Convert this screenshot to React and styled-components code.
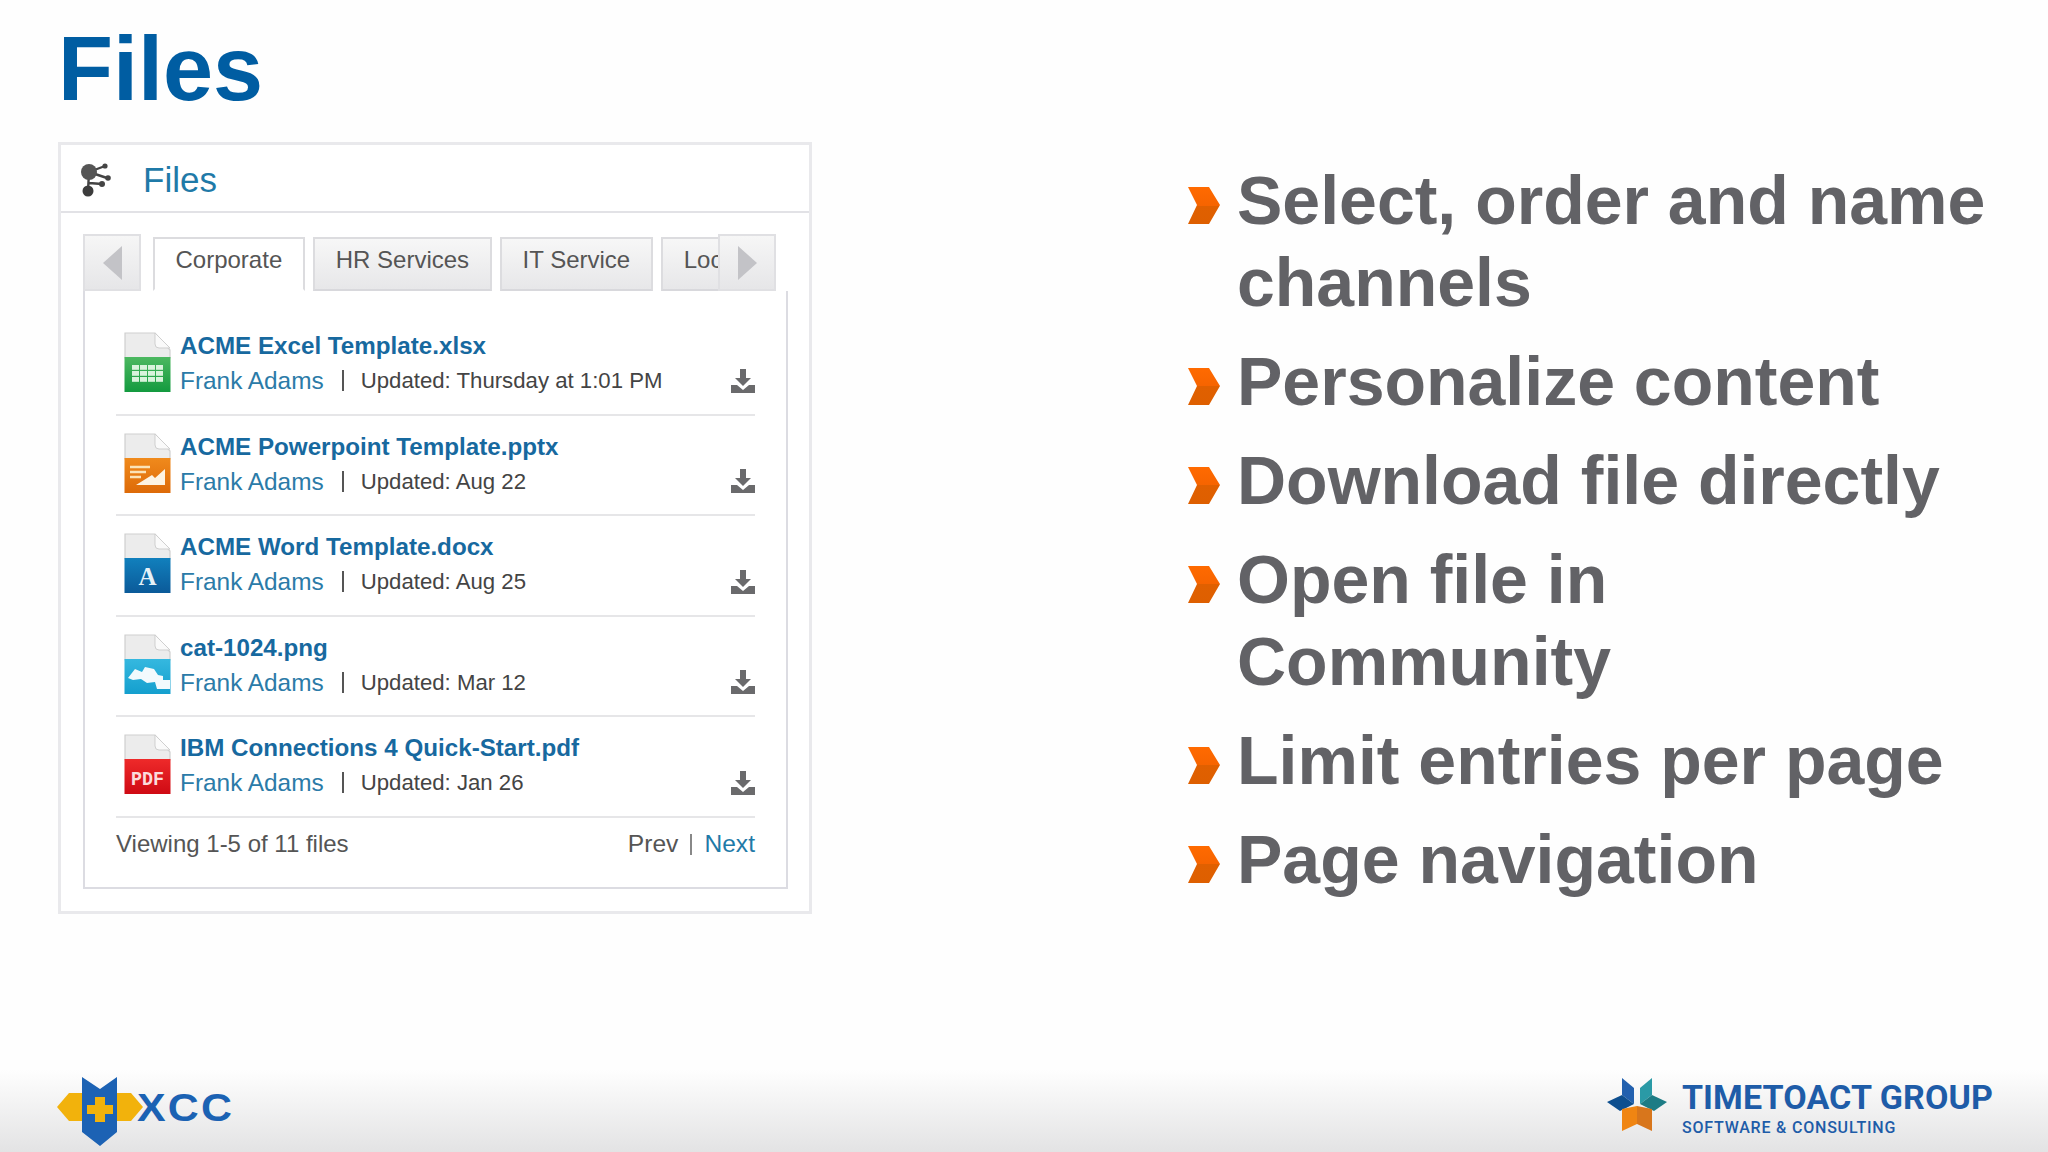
import React from "react";
import styled, { createGlobalStyle } from "styled-components";

const GlobalStyle = createGlobalStyle`
  html, body {
    margin: 0;
    padding: 0;
    background: #fefefe;
    font-family: "Liberation Sans", Arial, sans-serif;
  }
`;

const Page = styled.div`
  width: 2048px;
  height: 1152px;
  display: flex;
  flex-direction: column;
  overflow: hidden;
  background: #fefefe;
`;

const Title = styled.h1`
  margin: 19px 0 23px 58px;
  font-size: 90px;
  line-height: 100px;
  font-weight: 700;
  color: #005da2;
`;

const Main = styled.div`
  flex: 1;
  display: flex;
  align-items: flex-start;
  padding-left: 58px;
`;

const Panel = styled.section`
  width: 754px;
  height: 772px;
  box-sizing: border-box;
  display: flex;
  flex-direction: column;
  border: 3px solid #e9e9ec;
  background: #fff;
`;

const PanelHeader = styled.header`
  height: 68px;
  flex: none;
  box-sizing: border-box;
  display: flex;
  align-items: center;
  gap: 32px;
  padding: 3px 0 0 19px;
  border-bottom: 2px solid #e2e2e6;
  font-size: 35px;
  color: #1f7aa8;
`;

const PanelBody = styled.div`
  flex: 1;
  display: flex;
  flex-direction: column;
  padding: 21px 21px 22px 22px;
`;

const TabBar = styled.div`
  flex: none;
  width: 693px;
  height: 57px;
  display: flex;
  align-items: flex-end;
`;

const ArrowButton = styled.div`
  flex: none;
  width: 58px;
  height: 57px;
  box-sizing: border-box;
  display: flex;
  align-items: center;
  justify-content: center;
  border: 2px solid #e0e0e3;
  background: linear-gradient(#f6f6f6, #e6e6e8);
  &::before {
    content: "";
    border-top: 17px solid transparent;
    border-bottom: 17px solid transparent;
    ${(props) =>
      props.$dir === "left"
        ? "border-right: 19px solid #c3c3c7;"
        : "border-left: 19px solid #c3c3c7;"}
  }
`;

const TabStrip = styled.div`
  flex: 1;
  min-width: 0;
  height: 54px;
  display: flex;
  gap: 8.5px;
  padding-left: 12px;
  overflow: hidden;
`;

const Tab = styled.div`
  flex: none;
  height: 54px;
  box-sizing: border-box;
  padding: 0 20.5px 8px;
  display: flex;
  align-items: center;
  font-size: 24px;
  color: #555;
  border: 2px solid #dcdcdf;
  background: ${(props) =>
    props.$active ? "#fff" : "linear-gradient(#f7f7f7, #e7e7e9)"};
  border-bottom: ${(props) => (props.$active ? "2px solid #fff" : "2px solid #d8d8dc")};
`;

const TabContent = styled.div`
  flex: 1;
  width: 705px;
  box-sizing: border-box;
  display: flex;
  flex-direction: column;
  padding: 24px 31px 0;
  border: 2px solid #dcdce2;
  border-top: none;
`;

const Row = styled.div`
  height: 100.5px;
  flex: none;
  box-sizing: border-box;
  display: flex;
  align-items: flex-start;
  padding: 13px 0 0 8px;
  border-bottom: 2px solid #e6e6e8;
`;

const IconSlot = styled.div`
  flex: none;
  width: 47px;
  height: 60px;
  margin: 4px 9px 0 0;
`;

const RowText = styled.div`
  flex: 1;
  min-width: 0;
`;

const FileName = styled.div`
  font-size: 24.2px;
  line-height: 35px;
  font-weight: 700;
  color: #17699f;
  white-space: nowrap;
`;

const Meta = styled.div`
  display: flex;
  align-items: center;
  font-size: 24.4px;
  line-height: 35px;
  white-space: nowrap;
  color: #444;
`;

const Author = styled.span`
  color: #2b7ba8;
`;

const Updated = styled.span`
  font-size: 22.2px;
`;

const Divider = styled.span`
  width: 2px;
  height: 21px;
  margin: 0 17px 0 18px;
  background: #555;
`;

const DownloadSlot = styled.div`
  margin-left: auto;
  width: 24px;
  height: 24px;
  display: flex;
`;

const ListFooter = styled.div`
  flex: 1;
  display: flex;
  align-items: center;
  justify-content: space-between;
  padding-bottom: 16px;
  font-size: 24px;
  color: #555;
`;

const Pager = styled.div`
  display: flex;
  align-items: center;
  gap: 12px;
  font-size: 24.6px;
`;

const PagerBar = styled.span`
  width: 2px;
  height: 21px;
  background: #888;
`;

const NextLink = styled.span`
  color: #1f7aa8;
`;

const Points = styled.ul`
  list-style: none;
  margin: 17px 0 0 376px;
  padding: 0;
  display: flex;
  flex-direction: column;
  gap: 17px;
`;

const Point = styled.li`
  display: flex;
  gap: 17px;
  font-size: 68px;
  line-height: 82px;
  font-weight: 700;
  color: #626266;
  white-space: pre-line;
`;

const Chevron = styled.svg`
  flex: none;
  width: 32px;
  height: 37px;
  margin-top: 28px;
`;

const Footer = styled.footer`
  height: 82px;
  flex: none;
  box-sizing: border-box;
  display: flex;
  align-items: flex-start;
  justify-content: space-between;
  padding: 7px 55px 0 57px;
  background: linear-gradient(#fefefe, #f6f6f6 30%, #e3e3e4);
`;

const XccLogo = styled.div`
  display: flex;
  align-items: center;
`;

const XccText = styled.span`
  margin-left: -6px;
  margin-top: -8px;
  font-size: 39px;
  font-weight: 700;
  letter-spacing: 2px;
  color: #1b62b3;
  transform: scaleX(1.1);
  transform-origin: left center;
`;

const GroupLogo = styled.div`
  display: flex;
  align-items: flex-start;
  gap: 15px;
  padding-top: 1px;
`;

const GroupText = styled.div`
  display: flex;
  flex-direction: column;
  padding-top: 1px;
  font-family: Roboto, "Liberation Sans", sans-serif;
  color: #1e5ca8;
`;

const GroupName = styled.span`
  font-size: 34px;
  line-height: 37px;
  font-weight: 700;
  letter-spacing: 0.1px;
  white-space: nowrap;
`;

const GroupTag = styled.span`
  font-size: 16px;
  line-height: 24px;
  font-weight: 500;
  letter-spacing: 0.8px;
  white-space: nowrap;
`;

const tabs = ["Corporate", "HR Services", "IT Service", "Local"];

const files = [
  { name: "ACME Excel Template.xlsx", updated: "Updated: Thursday at 1:01 PM", kind: "xlsx" },
  { name: "ACME Powerpoint Template.pptx", updated: "Updated: Aug 22", kind: "pptx" },
  { name: "ACME Word Template.docx", updated: "Updated: Aug 25", kind: "docx" },
  { name: "cat-1024.png", updated: "Updated: Mar 12", kind: "png" },
  { name: "IBM Connections 4 Quick-Start.pdf", updated: "Updated: Jan 26", kind: "pdf" },
];

const points = [
  "Select, order and name\nchannels",
  "Personalize content",
  "Download file directly",
  "Open file in\nCommunity",
  "Limit entries per page",
  "Page navigation",
];

const bandColors = {
  xlsx: ["#4cb860", "#139a3f"],
  pptx: ["#f08a1c", "#dd6a08"],
  docx: ["#1180bd", "#0b5a99"],
  png: ["#35b8df", "#149fce"],
  pdf: ["#ee2a2a", "#cf0a14"],
};

const FileGlyph = ({ kind }) => {
  if (kind === "xlsx") {
    const cells = [];
    for (let y = 0; y < 3; y++) {
      for (let x = 0; x < 4; x++) {
        cells.push(<rect key={`${x}-${y}`} x={8 + x * 8} y={33 + y * 6} width="7" height="4.8" fill="#d9f3dc" />);
      }
    }
    return <>{cells}</>;
  }
  if (kind === "pptx") {
    return (
      <>
        <path d="M12 52 L28 42 L31 45 L41 36 L41 52 Z" fill="#fdf3e2" />
        <path d="M6 34h20M6 39h16M6 44h11" stroke="#fbe3b8" strokeWidth="2.4" />
      </>
    );
  }
  if (kind === "docx") {
    return (
      <text x="23.5" y="52" textAnchor="middle" fontFamily="Liberation Serif, serif" fontWeight="700" fontSize="25" fill="#e6f2f8">
        A
      </text>
    );
  }
  if (kind === "png") {
    return (
      <path
        d="M4 44 L11 35 L18 38 L21 33 L30 35 L34 41 L39 42 L39 46 L46 46 L46 55 L33 55 L31 48 L23 49 L17 45 L9 46 Z"
        fill="#f2fafd"
      />
    );
  }
  return (
    <text x="23.5" y="51" textAnchor="middle" fontFamily="Liberation Mono, monospace" fontWeight="700" fontSize="21" textLength="33" lengthAdjust="spacingAndGlyphs" fill="#fbdcdc">
      PDF
    </text>
  );
};

const FileIcon = ({ kind }) => {
  const [top, bottom] = bandColors[kind];
  const id = `band-${kind}`;
  return (
    <svg width="47" height="60" viewBox="0 0 47 60">
      <defs>
        <linearGradient id={id} x1="0" y1="0" x2="0" y2="1">
          <stop offset="0" stopColor={top} />
          <stop offset="1" stopColor={bottom} />
        </linearGradient>
      </defs>
      <path d="M1 1 H31 L46 18 V26 H1 Z" fill="#ececec" stroke="#cfcfcf" strokeWidth="1.2" />
      <path d="M31 1 V12 Q31 16 35 16 H46 Z" fill="#fafafa" stroke="#cfcfcf" strokeWidth="1" />
      <rect x="0.5" y="25" width="46" height="35" fill={`url(#${id})`} />
      <FileGlyph kind={kind} />
    </svg>
  );
};

const DownloadIcon = () => (
  <svg width="24" height="24" viewBox="0 0 24 24">
    <path d="M9 0 H15 V9 H20 L12 17 L4 9 H9 Z" fill="#6a6a6c" />
    <path d="M0 16 H6 L12 21 L18 16 H24 V24 H0 Z" fill="#6a6a6c" />
  </svg>
);

const ConnectionsIcon = () => (
  <svg width="31" height="34" viewBox="0 0 31 34">
    <g stroke="#444" strokeWidth="2.4">
      <path d="M9 9 L25 3 M9 9 L27 15 M9 9 L8 28 M9 20 L22 21" />
    </g>
    <circle cx="9" cy="9" r="8" fill="#555" />
    <circle cx="25" cy="3" r="2.6" fill="#444" />
    <circle cx="28" cy="15" r="2.8" fill="#444" />
    <circle cx="22" cy="21" r="3" fill="#444" />
    <circle cx="8" cy="28" r="5.5" fill="#3c3c3c" />
  </svg>
);

const BulletIcon = ({ id }) => (
  <Chevron viewBox="0 0 32 37">
    <defs>
      <linearGradient id={id} x1="0" y1="0" x2="0" y2="1">
        <stop offset="0" stopColor="#ff6a00" />
        <stop offset="0.5" stopColor="#f66400" />
        <stop offset="0.5" stopColor="#e06000" />
        <stop offset="1" stopColor="#de5f00" />
      </linearGradient>
    </defs>
    <polygon points="0,0 21,0 32,18 21,37 0,37 9,18" fill={`url(#${id})`} />
  </Chevron>
);

const XccMark = () => (
  <svg width="86" height="70" viewBox="0 0 86 70">
    <polygon points="0,30 12,16 74,16 86,30 74,44 12,44" fill="#f2b20c" />
    <polygon points="25,0 43,12 60,0 60,55 43,69 25,55" fill="#1c62b4" />
    <path d="M38 20 H48 V28 H56 V37 H48 V45 H38 V37 H30 V28 H38 Z" fill="#f2b20c" />
  </svg>
);

const StarMark = () => (
  <svg width="60" height="54" viewBox="0 0 60 54">
    <polygon points="15,0 27,10 27,26 15,17" fill="#2260ae" />
    <polygon points="0,24 15,17 27,26 13,33" fill="#0e4f8f" />
    <polygon points="45,0 33,10 33,26 45,17" fill="#2a9aa6" />
    <polygon points="60,24 45,17 33,26 47,33" fill="#1d7c85" />
    <polygon points="15,31 30,28 30,46 15,53" fill="#f08512" />
    <polygon points="45,31 30,28 30,46 45,53" fill="#d8761c" />
  </svg>
);

const App = () => (
  <Page>
    <GlobalStyle />
    <Title>Files</Title>
    <Main>
      <Panel>
        <PanelHeader>
          <ConnectionsIcon />
          Files
        </PanelHeader>
        <PanelBody>
          <TabBar>
            <ArrowButton $dir="left" />
            <TabStrip>
              {tabs.map((tab, i) => (
                <Tab key={tab} $active={i === 0}>
                  {tab}
                </Tab>
              ))}
            </TabStrip>
            <ArrowButton $dir="right" />
          </TabBar>
          <TabContent>
            {files.map((file) => (
              <Row key={file.name}>
                <IconSlot>
                  <FileIcon kind={file.kind} />
                </IconSlot>
                <RowText>
                  <FileName>{file.name}</FileName>
                  <Meta>
                    <Author>Frank Adams</Author>
                    <Divider />
                    <Updated>{file.updated}</Updated>
                    <DownloadSlot>
                      <DownloadIcon />
                    </DownloadSlot>
                  </Meta>
                </RowText>
              </Row>
            ))}
            <ListFooter>
              <span>Viewing 1-5 of 11 files</span>
              <Pager>
                <span>Prev</span>
                <PagerBar />
                <NextLink>Next</NextLink>
              </Pager>
            </ListFooter>
          </TabContent>
        </PanelBody>
      </Panel>
      <Points>
        {points.map((point, i) => (
          <Point key={point}>
            <BulletIcon id={`bullet-${i}`} />
            <span>{point}</span>
          </Point>
        ))}
      </Points>
    </Main>
    <Footer>
      <XccLogo>
        <XccMark />
        <XccText>XCC</XccText>
      </XccLogo>
      <GroupLogo>
        <StarMark />
        <GroupText>
          <GroupName>TIMETOACT GROUP</GroupName>
          <GroupTag>SOFTWARE &amp; CONSULTING</GroupTag>
        </GroupText>
      </GroupLogo>
    </Footer>
  </Page>
);

export default App;
